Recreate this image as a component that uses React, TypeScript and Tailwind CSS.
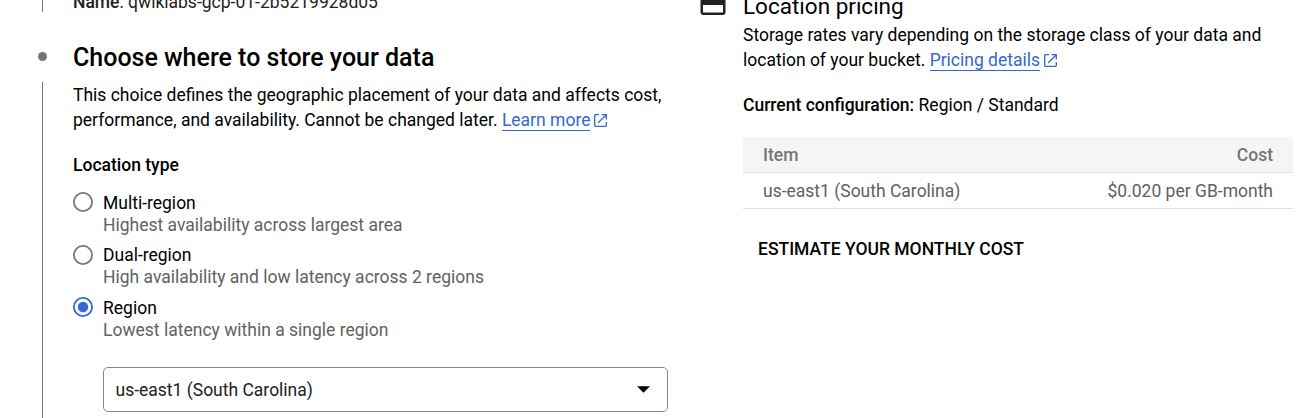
import type { ReactNode } from "react";

function ExternalIcon() {
  return (
    <svg className="ml-1 inline-block h-[13px] w-[13px] align-[-1px]" viewBox="0 0 13 13" fill="none" stroke="#3367d6" strokeWidth="1.3">
      <path d="M5 0.7H1.4a.7.7 0 0 0-.7.7v10.2c0 .4.3.7.7.7h10.2c.4 0 .7-.3.7-.7V8" />
      <path d="M7.5 0.7h4.8v4.8M12.3 0.7L4.2 8.8" />
    </svg>
  );
}

function Link({ children }: { children: ReactNode }) {
  return (
    <>
      <a href="#" className="inline-block h-[23px] border-b border-[#3367d6] align-top text-[#3367d6]">
        {children}
      </a>
      <ExternalIcon />
    </>
  );
}

function RadioOption({ label, hint, checked = false }: { label: string; hint: string; checked?: boolean }) {
  return (
    <label className="flex h-[52.4px] gap-2.5">
      <svg className="mt-[0.2px] h-5 w-5 shrink-0" viewBox="0 0 20 20">
        <circle cx="10" cy="10" r="9.1" fill="none" stroke={checked ? "#3367d6" : "#757575"} strokeWidth="1.8" />
        {checked && <circle cx="10" cy="10" r="5.2" fill="#3367d6" />}
      </svg>
      <span className="flex flex-col leading-[22px]">
        <span>{label}</span>
        <span className="text-[#616161]">{hint}</span>
      </span>
    </label>
  );
}

export default function App() {
  return (
    <div className="flex h-[418px] w-[1315px] overflow-hidden whitespace-nowrap bg-white font-['Roboto',sans-serif] text-[17.5px] leading-[25px] text-black">
      <div className="flex w-[73px] shrink-0 flex-col pl-[38px]">
        <div className="ml-1 h-3 w-px shrink-0 bg-[#757575]" />
        <div className="mt-10 h-[9px] w-[9px] shrink-0 rounded-full bg-[#757575]" />
        <div className="ml-1 mt-[21px] w-px grow bg-[#757575]" />
      </div>

      <main className="flex w-[595px] shrink-0 flex-col">
        <p className="-mt-[10px] h-[25px] shrink-0 text-[#212121]">
          <span className="font-medium">Name</span>: qwiklabs-gcp-01-2b5219928d05
        </p>
        <h2 className="mt-7 text-[25px] font-medium leading-[30px]">Choose where to store your data</h2>
        <p className="mt-[10px]">
          This choice defines the geographic placement of your data and affects cost,
          <br />
          performance, and availability. Cannot be changed later. <Link>Learn more</Link>
        </p>
        <h3 className="mt-5 font-medium">Location type</h3>
        <div className="mt-[14px] flex flex-col">
          <RadioOption label="Multi-region" hint="Highest availability across largest area" />
          <RadioOption label="Dual-region" hint="High availability and low latency across 2 regions" />
          <RadioOption label="Region" hint="Lowest latency within a single region" checked />
        </div>
        <div className="ml-[30px] mt-[17.8px] flex h-[45px] shrink-0 items-center justify-between rounded-[5px] border border-[#80868b] pl-[11.5px] pr-[17px] text-[#212121]">
          <span className="pt-0.5">us-east1 (South Carolina)</span>
          <svg className="h-[7px] w-[13px]" viewBox="0 0 13 7">
            <path d="M0 0.3h13L6.5 6.8z" fill="#000" />
          </svg>
        </div>
      </main>

      <aside className="ml-[32px] flex w-[593px] shrink-0">
        <svg className="-mt-[8px] h-[24px] w-[26px] shrink-0" viewBox="0 0 26 24">
          <rect x="0.5" y="3" width="25" height="20" rx="2.4" fill="#212121" />
          <path d="M3 13h20v7.5H3z" fill="#fff" />
        </svg>
        <div className="ml-[17px] flex w-[550px] flex-col">
          <h3 className="-mt-[7px] h-[26px] shrink-0 text-[22.5px] leading-[26px]">Location pricing</h3>
          <p className="mt-[4px]">
            Storage rates vary depending on the storage class of your data and
            <br />
            location of your bucket. <Link>Pricing details</Link>
          </p>
          <p className="mt-5">
            <span className="font-medium">Current configuration:</span> Region / Standard
          </p>
          <div className="mt-[19px] flex h-9 shrink-0 items-center justify-between border-b border-[#e0e0e0] bg-[#f5f5f5] px-5 pt-px font-medium text-[#757575]">
            <span>Item</span>
            <span>Cost</span>
          </div>
          <div className="flex h-9 shrink-0 items-center justify-between border-b border-[#e0e0e0] px-5 pt-px text-[#616161]">
            <span>us-east1 (South Carolina)</span>
            <span>$0.020 per GB-month</span>
          </div>
          <button className="ml-[15px] mt-[28px] self-start font-medium">ESTIMATE YOUR MONTHLY COST</button>
        </div>
      </aside>
    </div>
  );
}
